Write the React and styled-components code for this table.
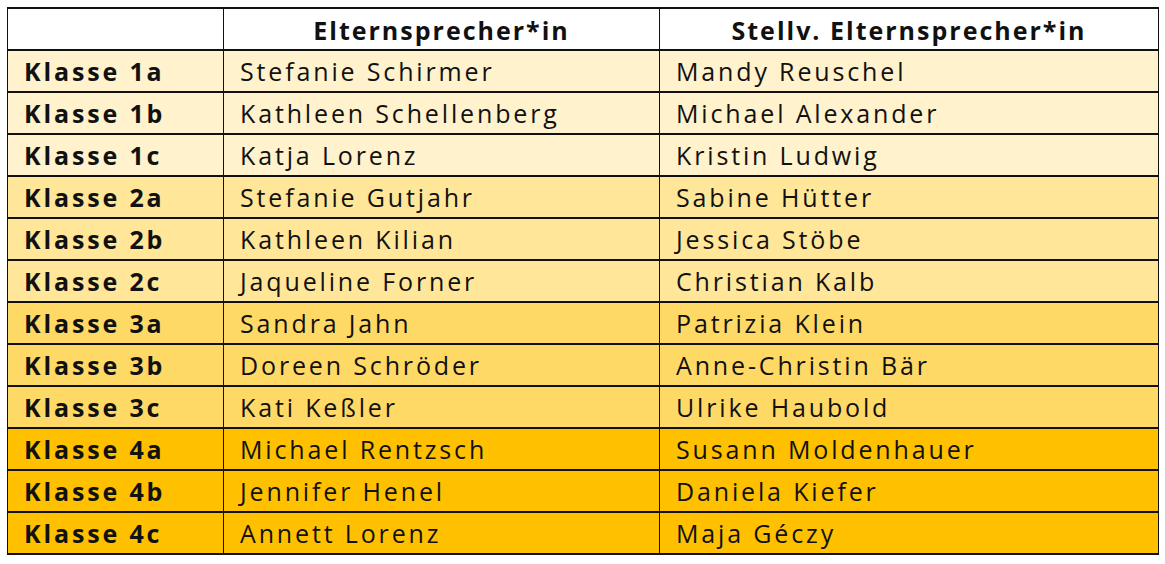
import React from "react";
import styled, { createGlobalStyle } from "styled-components";

const GlobalStyle = createGlobalStyle`
  body {
    margin: 0;
    background: #fff;
    font-family: "Open Sans", "Liberation Sans", sans-serif;
    color: #111;
  }
`;

const Page = styled.div`
  padding: 7px 7px;
`;

const Table = styled.table`
  width: 1151px;
  border-collapse: collapse;
  table-layout: fixed;
`;

const HeadCell = styled.th`
  height: 38px;
  padding: 2px 0 0;
  border: 1.5px solid #111;
  border-top-width: 2px;
  border-bottom-width: 2px;
  font-size: 25px;
  font-weight: 700;
  text-align: center;
  letter-spacing: 2px;
`;

const Row = styled.tr`
  background: ${(p) => p.$bg};
`;

const Cell = styled.td`
  height: 40px;
  padding: 0 0 0 16px;
  border: 1.5px solid #111;
  border-top-width: 2px;
  border-bottom-width: 2px;
  font-size: 25px;
  font-weight: ${(p) => (p.$bold ? 700 : 400)};
  letter-spacing: 2.85px;
  white-space: nowrap;
`;

const shades = {
  1: "#fff2cc",
  2: "#ffe699",
  3: "#ffd966",
  4: "#ffc000",
};

const rows = [
  ["1a", "Stefanie Schirmer", "Mandy Reuschel"],
  ["1b", "Kathleen Schellenberg", "Michael Alexander"],
  ["1c", "Katja Lorenz", "Kristin Ludwig"],
  ["2a", "Stefanie Gutjahr", "Sabine Hütter"],
  ["2b", "Kathleen Kilian", "Jessica Stöbe"],
  ["2c", "Jaqueline Forner", "Christian Kalb"],
  ["3a", "Sandra Jahn", "Patrizia Klein"],
  ["3b", "Doreen Schröder", "Anne-Christin Bär"],
  ["3c", "Kati Keßler", "Ulrike Haubold"],
  ["4a", "Michael Rentzsch", "Susann Moldenhauer"],
  ["4b", "Jennifer Henel", "Daniela Kiefer"],
  ["4c", "Annett Lorenz", "Maja Géczy"],
];

export default function App() {
  return (
    <Page>
      <GlobalStyle />
      <Table>
        <colgroup>
          <col style={{ width: 216 }} />
          <col style={{ width: 436 }} />
          <col style={{ width: 499 }} />
        </colgroup>
        <thead>
          <tr>
            <HeadCell />
            <HeadCell>Elternsprecher*in</HeadCell>
            <HeadCell>Stellv. Elternsprecher*in</HeadCell>
          </tr>
        </thead>
        <tbody>
          {rows.map(([cls, rep, dep]) => (
            <Row key={cls} $bg={shades[cls[0]]}>
              <Cell $bold>Klasse {cls}</Cell>
              <Cell>{rep}</Cell>
              <Cell>{dep}</Cell>
            </Row>
          ))}
        </tbody>
      </Table>
    </Page>
  );
}
